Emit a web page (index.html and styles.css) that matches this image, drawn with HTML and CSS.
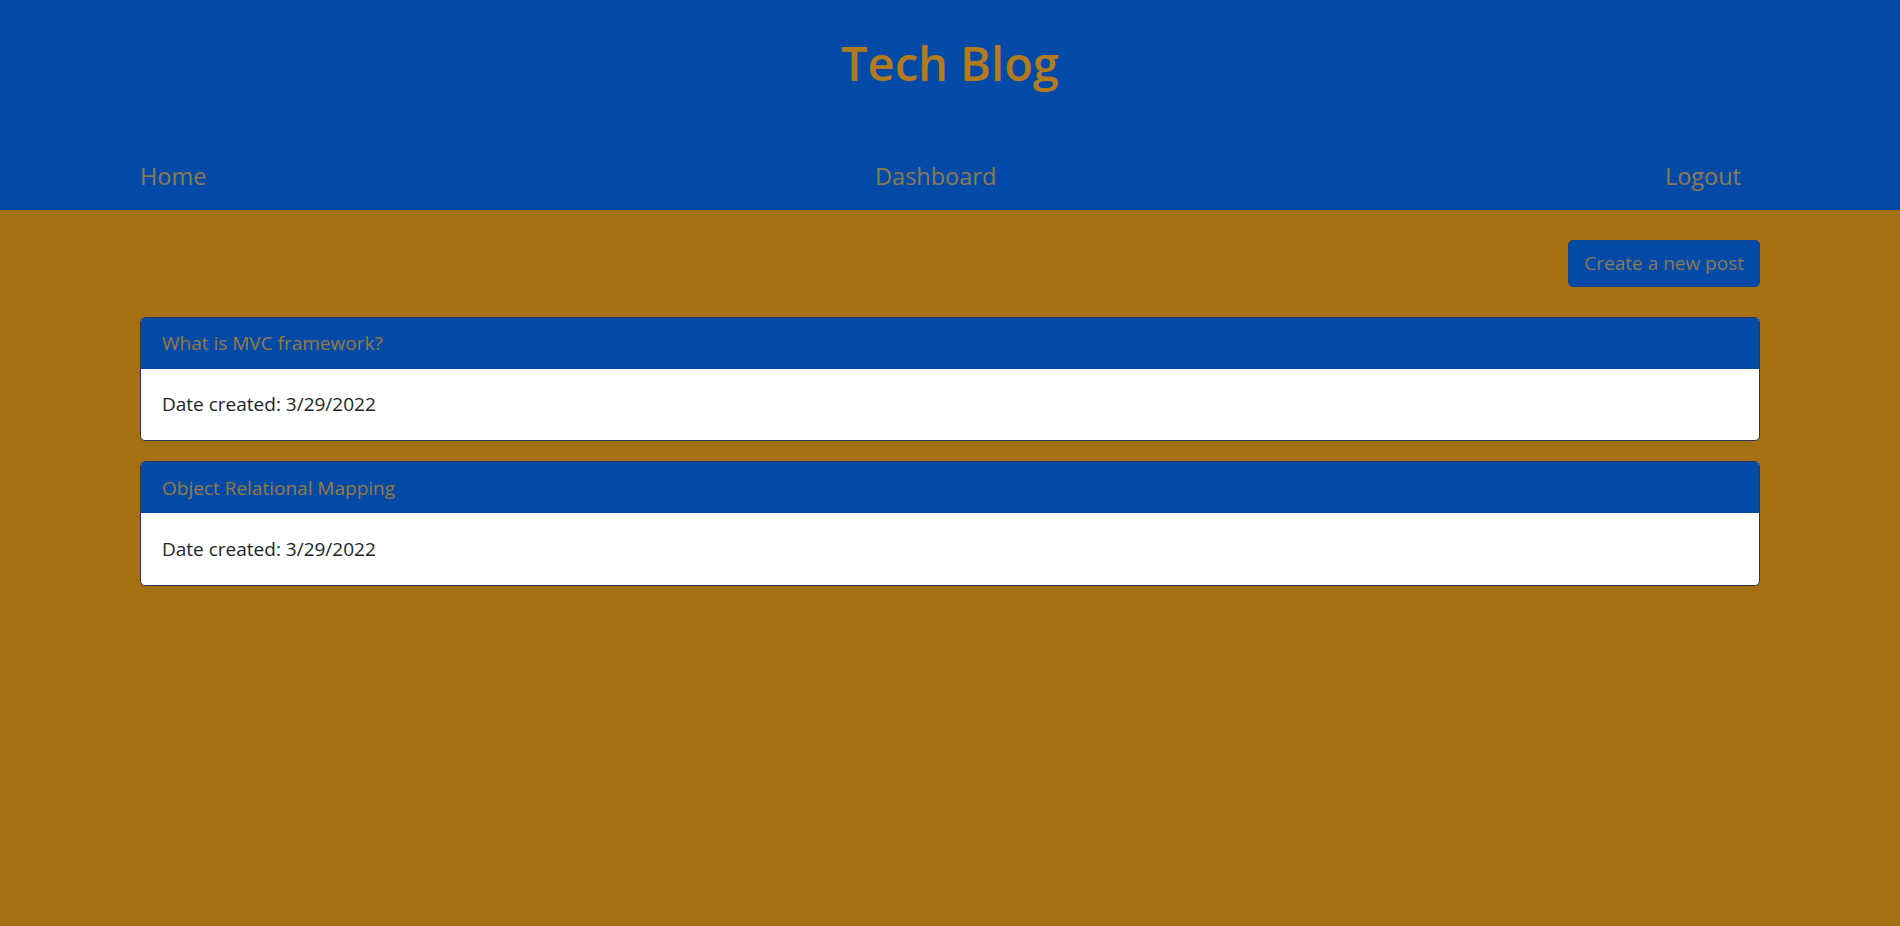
FILE: index.html
```html
<!DOCTYPE html>
<html lang="en">
<head>
<meta charset="utf-8">
<title>Tech Blog</title>
<link rel="stylesheet" href="styles.css">
</head>
<body>
<header class="site-header">
  <h1 class="site-title">Tech Blog</h1>
  <nav class="site-nav">
    <a class="nav-link" href="#">Home</a>
    <a class="nav-link" href="#">Dashboard</a>
    <a class="nav-link nav-link-last" href="#">Logout</a>
  </nav>
</header>
<main class="container">
  <div class="actions">
    <button class="btn-new" type="button">Create a new post</button>
  </div>
  <article class="post-card">
    <div class="post-card-header">What is MVC framework?</div>
    <div class="post-card-body">Date created: 3/29/2022</div>
  </article>
  <article class="post-card">
    <div class="post-card-header">Object Relational Mapping</div>
    <div class="post-card-body">Date created: 3/29/2022</div>
  </article>
</main>
</body>
</html>
```

FILE: styles.css
```css
* { box-sizing: border-box; }

html, body {
  margin: 0;
  padding: 0;
}

body {
  background: #a37012;
  font-family: "Open Sans", "Noto Sans", "Liberation Sans", sans-serif;
  color: #212529;
  min-height: 926px;
}

.site-header {
  background: #034aa6;
  height: 210px;
  padding-top: 35px;
}

.site-title {
  margin: 0;
  text-align: center;
  font-size: 47px;
  line-height: 57px;
  font-weight: 600;
  color: #b47b1d;
}

.site-nav {
  width: 1620px;
  margin: 66px auto 0;
  display: flex;
  justify-content: space-between;
}

.nav-link {
  font-size: 23.5px;
  line-height: 36px;
  color: #8d7a52;
  text-decoration: none;
}

.nav-link-last {
  margin-right: 19px;
}

.container {
  width: 1620px;
  margin: 0 auto;
  padding-top: 30px;
}

.actions {
  display: flex;
  justify-content: flex-end;
  margin-bottom: 30px;
}

.btn-new {
  font-family: inherit;
  font-size: 19px;
  line-height: 28.8px;
  padding: 8px 15px;
  background: #034aa6;
  color: #8d7a52;
  border: 1px solid #0a4493;
  border-radius: 5px;
}

.post-card {
  border: 1px solid #233a58;
  border-radius: 5px;
  overflow: hidden;
  background: #fff;
  margin-bottom: 20px;
}

.post-card-header {
  background: #034aa6;
  color: #997a40;
  font-size: 19px;
  line-height: 28.8px;
  padding: 11.5px 21px 10.5px;
}

.post-card-body {
  font-size: 19px;
  line-height: 28.8px;
  padding: 21.5px 21px;
  color: #212529;
}
```
